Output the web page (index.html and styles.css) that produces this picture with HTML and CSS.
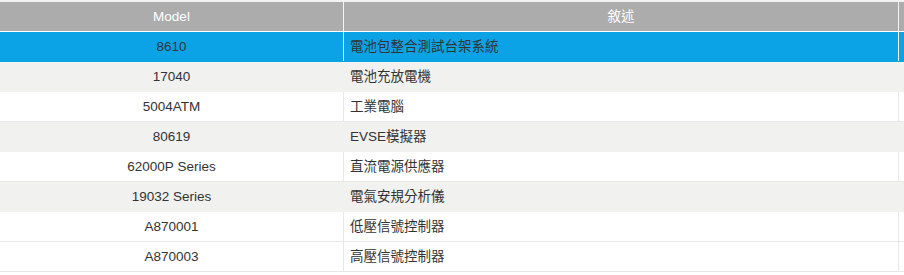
FILE: index.html
```html
<!DOCTYPE html>
<html lang="zh-Hant">
<head>
<meta charset="utf-8">
<title>Products</title>
<link rel="stylesheet" href="styles.css">
</head>
<body>
<div class="table">
  <div class="row head">
    <div class="cell c1">Model</div>
    <div class="cell c2 center">敘述</div>
    <div class="cell c3"></div>
  </div>
  <div class="row active">
    <div class="cell c1">8610</div>
    <div class="cell c2">電池包整合測試台架系統</div>
    <div class="cell c3"></div>
  </div>
  <div class="row odd">
    <div class="cell c1">17040</div>
    <div class="cell c2">電池充放電機</div>
    <div class="cell c3"></div>
  </div>
  <div class="row">
    <div class="cell c1">5004ATM</div>
    <div class="cell c2">工業電腦</div>
    <div class="cell c3"></div>
  </div>
  <div class="row odd">
    <div class="cell c1">80619</div>
    <div class="cell c2">EVSE模擬器</div>
    <div class="cell c3"></div>
  </div>
  <div class="row">
    <div class="cell c1">62000P Series</div>
    <div class="cell c2">直流電源供應器</div>
    <div class="cell c3"></div>
  </div>
  <div class="row odd">
    <div class="cell c1">19032 Series</div>
    <div class="cell c2">電氣安規分析儀</div>
    <div class="cell c3"></div>
  </div>
  <div class="row">
    <div class="cell c1">A870001</div>
    <div class="cell c2">低壓信號控制器</div>
    <div class="cell c3"></div>
  </div>
  <div class="row">
    <div class="cell c1">A870003</div>
    <div class="cell c2">高壓信號控制器</div>
    <div class="cell c3"></div>
  </div>
</div>
</body>
</html>
```
FILE: styles.css
```css
html, body {
  margin: 0;
  padding: 0;
  overflow: hidden;
  background: #ffffff;
}

body {
  font-family: "Liberation Sans", Arial, "Noto Sans CJK TC", sans-serif;
  font-size: 13.5px;
  color: #333333;
}

.table {
  width: 100%;
  border-top: 2px solid #f2f2f2;
}

.row {
  display: grid;
  grid-template-columns: 344px 555px 1fr;
  border-bottom: 1px solid #e8e8e8;
  background: #ffffff;
}

.cell {
  box-sizing: border-box;
  height: 29px;
  line-height: 29px;
  border-right: 1px solid #e8e8e8;
  white-space: nowrap;
  overflow: hidden;
}

.c1 {
  text-align: center;
}

.c2 {
  padding-left: 6px;
}

.c3 {
  border-right: 0;
}

.center {
  text-align: center;
  padding-left: 0;
}

.head {
  background: #acacac;
  color: #ffffff;
  border-bottom-color: #ffffff;
}

.head .cell {
  border-right-color: #f4f4f4;
}

.head .c3,
.active .c3 {
  border-right: 0;
}

.active {
  background: #0ba3e6;
  border-bottom-color: #0ba3e6;
}

.active .cell {
  border-right-color: #f4f4f4;
}

.odd {
  background: #f1f1ef;
  border-bottom-color: #f1f1ef;
}

.odd .cell {
  border-right-color: #f1f1ef;
}
```
